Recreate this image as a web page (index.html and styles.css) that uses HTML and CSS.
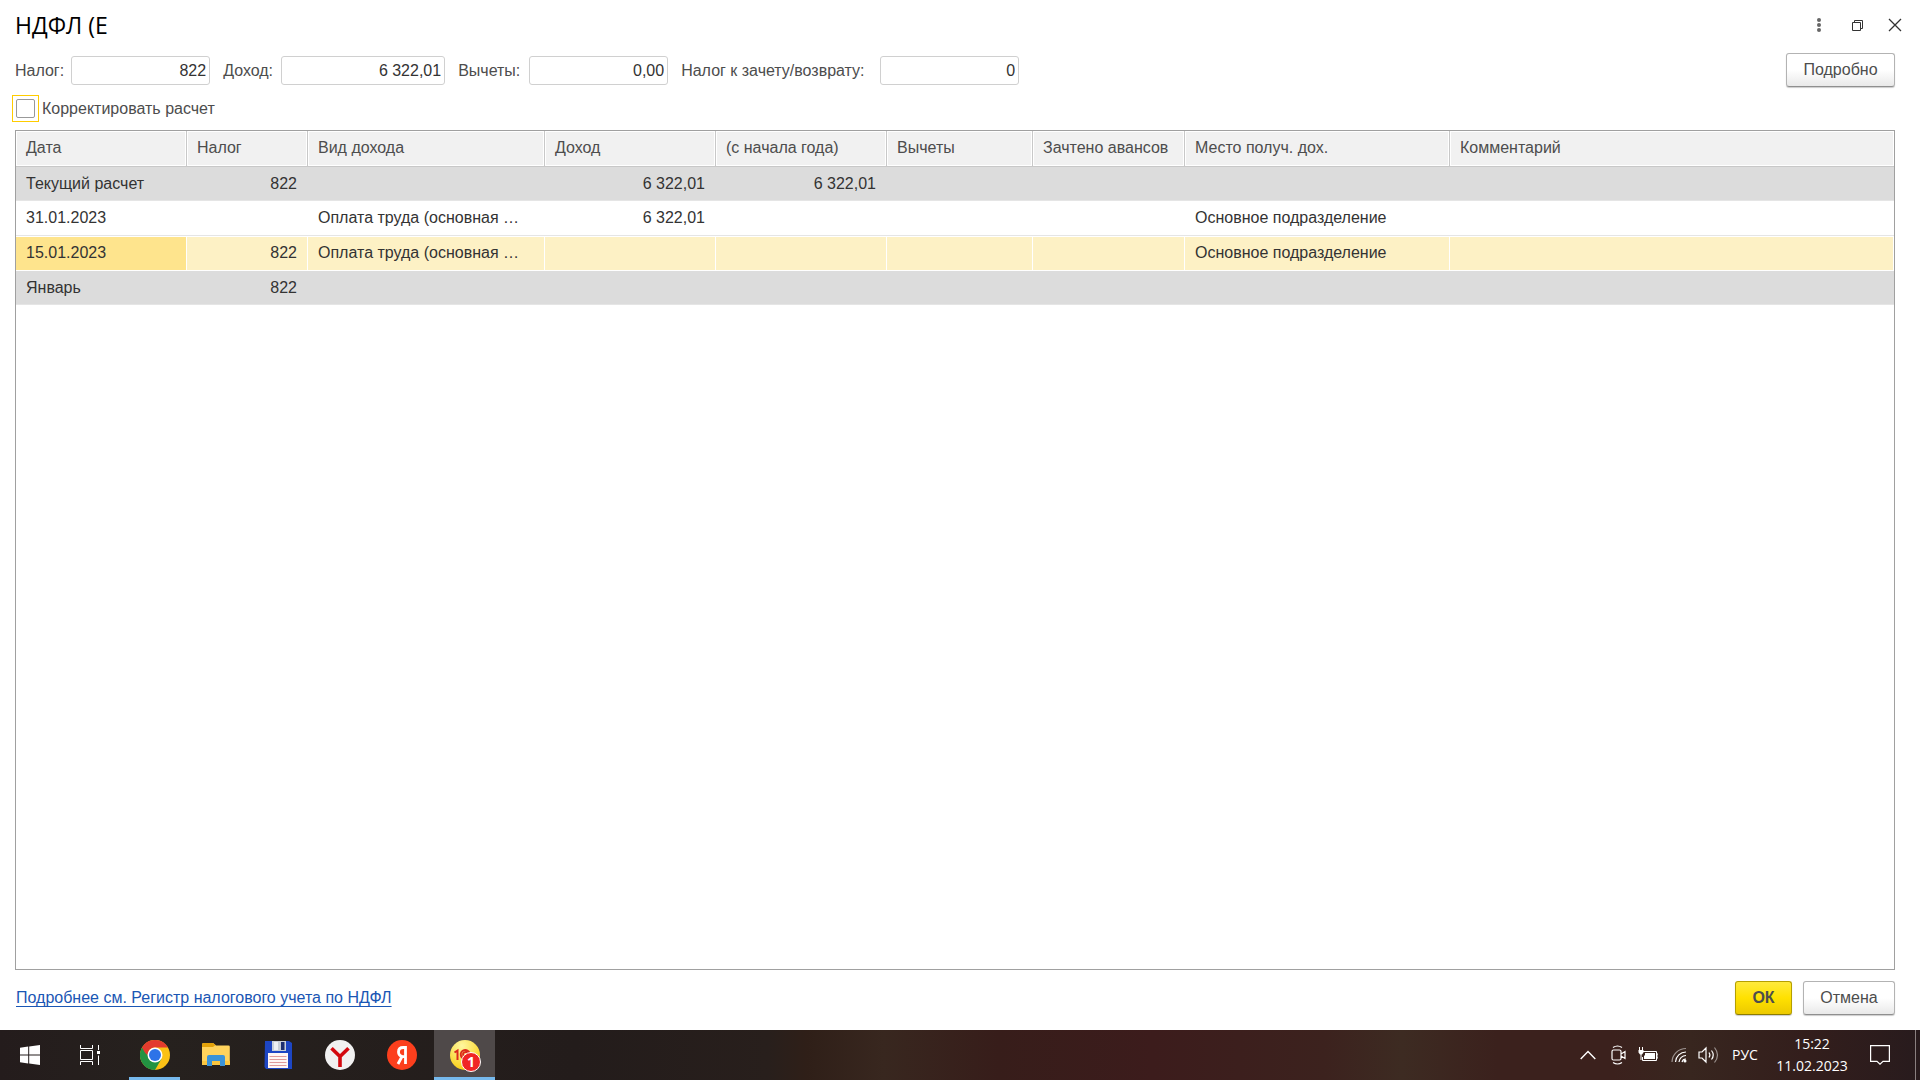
FILE: index.html
```html
<!DOCTYPE html>
<html lang="ru">
<head>
<meta charset="utf-8">
<title>НДФЛ</title>
<link rel="stylesheet" href="styles.css">
</head>
<body>
<main class="window">
  <header class="titlebar">
    <h1 class="title">НДФЛ (Е</h1>
    <div class="window-controls">
      <button class="icon-btn" type="button" aria-label="Меню"><svg width="20" height="20" viewBox="0 0 20 20" fill="#666"><circle cx="10" cy="5" r="2"/><circle cx="10" cy="10" r="2"/><circle cx="10" cy="15" r="2"/></svg></button>
      <button class="icon-btn" type="button" aria-label="Восстановить"><svg width="20" height="20" viewBox="0 0 20 20" fill="none" stroke="#333"><path d="M5.500 7.500h8v8h-8zM7.500 7V5.500h8v8H14"/></svg></button>
      <button class="icon-btn" type="button" aria-label="Закрыть"><svg width="20" height="20" viewBox="0 0 20 20" fill="none" stroke="#333" stroke-width="1.300"><path d="M4 4l12 12M16 4L4 16"/></svg></button>
    </div>
  </header>

  <form class="fields">
    <div class="field"><label for="tax">Налог:</label><input class="num" id="tax" type="text" value="822"></div>
    <div class="field"><label class="l-income" for="income">Доход:</label><input class="num num-wide" id="income" type="text" value="6 322,01"></div>
    <div class="field"><label class="l-deduct" for="deduct">Вычеты:</label><input class="num" id="deduct" type="text" value="0,00"></div>
    <div class="field"><label class="l-refund" for="refund">Налог к зачету/возврату:</label><input class="num" id="refund" type="text" value="0"></div>
    <button class="btn btn-details" type="button">Подробно</button>
  </form>

  <div class="adjust">
    <span class="check-focus"><input class="check" id="adjust" type="checkbox"></span>
    <label for="adjust">Корректировать расчет</label>
  </div>

  <div class="grid-box">
    <table class="grid">
      <colgroup><col class="c-date"><col class="c-tax"><col class="c-kind"><col class="c-sum"><col class="c-sum"><col class="c-deduct"><col class="c-advance"><col class="c-place"><col></colgroup>
      <thead>
        <tr><th>Дата</th><th>Налог</th><th>Вид дохода</th><th>Доход</th><th>(с начала года)</th><th>Вычеты</th><th>Зачтено авансов</th><th>Место получ. дох.</th><th>Комментарий</th></tr>
      </thead>
      <tbody>
        <tr class="group"><td>Текущий расчет</td><td class="r">822</td><td></td><td class="r">6 322,01</td><td class="r">6 322,01</td><td></td><td></td><td></td><td></td></tr>
        <tr><td>31.01.2023</td><td></td><td>Оплата труда (основная …</td><td class="r">6 322,01</td><td></td><td></td><td></td><td>Основное подразделение</td><td></td></tr>
        <tr class="selected"><td class="current">15.01.2023</td><td class="r">822</td><td>Оплата труда (основная …</td><td></td><td></td><td></td><td></td><td>Основное подразделение</td><td></td></tr>
        <tr class="group"><td>Январь</td><td class="r">822</td><td></td><td></td><td></td><td></td><td></td><td></td><td></td></tr>
      </tbody>
    </table>
  </div>

  <footer class="actions">
    <a class="link" href="#register">Подробнее см. Регистр налогового учета по НДФЛ</a>
    <button class="btn btn-ok" type="button">ОК</button>
    <button class="btn btn-cancel" type="button">Отмена</button>
  </footer>
</main>

<nav class="taskbar">
  <button class="sys" type="button" aria-label="Пуск"><svg width="20" height="20" viewBox="0 0 20 20" fill="#fff"><path d="M0 2.800L8.200 1.600V9.500H0zM9.200 1.400L20 0v9.500H9.200zM0 10.500h8.200v8L0 17.300zM9.200 10.500H20V20L9.200 18.600z"/></svg></button>
  <button class="sys" type="button" aria-label="Представление задач"><svg width="20" height="20" viewBox="0 0 20 20" fill="none" stroke="#fff"><path d="M.5 0v3.500h12V0M.5 20v-3.500h12V20M.5 5.500h12v9H.5zM18.500 0v5M18.500 10.500V20"/><path d="M17 6h3v3h-3z" fill="#fff" stroke="none"/></svg></button>
  <div class="apps">
    <button class="app running" type="button" aria-label="Chrome"><svg width="30" height="30" viewBox="0 0 30 30"><circle cx="15" cy="15" r="15" fill="#fbc116"/><path d="M15 30l6.500-11.200L15 15 2 7.500A15 15 0 0 0 15 30z" fill="#229342"/><path d="M2 7.500A15 15 0 0 1 28 7.500H15c-5 0-7.500 4-7.300 8L5 12.700z" fill="#e33b2e"/><circle cx="15" cy="15" r="7.500" fill="#fff"/><circle cx="15" cy="15" r="6" fill="#2d73e8"/></svg></button>
    <button class="app" type="button" aria-label="Проводник"><svg width="28" height="24" viewBox="0 0 28 24"><path d="M0 1.500Q0 0 1.500 0H11l3 2.500h12.500q1.300 0 1.300 1.300V22H0z" fill="#ffd35c"/><path d="M0 4V1.500Q0 0 1.500 0H11l2.500 2-2.500 2z" fill="#e3a20a"/><path d="M0 18h28v3.500Q28 22 27 22H1q-1 0-1-1z" fill="#fbc63f"/><path d="M5 23V14q0-2 2-2h14q2 0 2 2v9h-5v-5h-8v5z" fill="#3a93d8"/></svg></button>
    <button class="app" type="button" aria-label="Total Commander"><svg width="28" height="30" viewBox="0 0 28 30"><path d="M1 1h24l3 2v26H2l-1.500-2z" fill="#1d46c4"/><path d="M8 1h14v10H8z" fill="#c9d0d8"/><path d="M17 2h3.500v8H17z" fill="#1d2f70"/><path d="M10 2h4v8h-4z" fill="#eef1f4"/><path d="M4 13h20v15H4z" fill="#fff6f4"/><path d="M5.500 16.500h17m-17 3h17m-17 3h17m-17 3h17" stroke="#e09a9a"/></svg></button>
    <button class="app" type="button" aria-label="Яндекс Браузер"><svg width="30" height="30" viewBox="0 0 30 30"><circle cx="15" cy="15" r="15" fill="#f1f1f1"/><path d="M6.500 8.200L15 16.500l8.500-8.300M15 16v11" fill="none" stroke="#d3090f" stroke-width="3.600"/></svg></button>
    <button class="app" type="button" aria-label="Яндекс"><svg width="30" height="30" viewBox="0 0 30 30"><circle cx="15" cy="15" r="15" fill="#fc3f1d"/><path d="M18.500 24V7.500h-2.300c-3.300 0-4.700 2-4.700 4.400 0 2.600 1.400 4 4 4.700h3M15.300 16L11 24" fill="none" stroke="#fff" stroke-width="2.800"/></svg></button>
    <button class="app running active" type="button" aria-label="1С:Предприятие"><svg width="34" height="32" viewBox="0 0 34 32"><defs><radialGradient id="gold" cx=".4" cy=".2" r=".8"><stop offset="0" stop-color="#fff7a0"/><stop offset="1" stop-color="#f8cf16"/></radialGradient></defs><circle cx="17" cy="16" r="15" fill="url(#gold)"/><path d="M6.500 13.500l3-2V21M21.500 14a4.500 4.500 0 1 0-4 6H22M19.500 15a2.200 2.200 0 1 0-2 2.500H22" fill="none" stroke="#dc2a1c" stroke-width="2"/></svg><span class="badge">1</span></button>
  </div>
  <div class="tray">
    <svg class="t-chevron" width="16" height="10" viewBox="0 0 16 10" fill="none" stroke="#fff" stroke-width="1.400"><path d="M.7 9L8 1.500 15.300 9"/></svg>
    <svg class="t-camera" width="16" height="20" viewBox="0 0 16 20" fill="none" stroke="#fff" stroke-width="1.200"><path d="M2.500 5h6q1.500 0 1.500 1.500v7q0 1.500-1.500 1.500h-6Q1 15 1 13.500v-7Q1 5 2.500 5zM10 9l4-2.500v7L10 11M2 2.500Q6.500-.5 11 2.500M2 17.500q4.500 3 9 0"/></svg>
    <svg class="t-battery" width="20" height="16" viewBox="0 0 20 16" fill="none" stroke="#fff"><path d="M5 4.500h13.500v9h-14V10M18.500 7h1.500v4h-1.500M1.500 0v3M4.500 0v3M3 7v6"/><path d="M.5 3h5v2.500L4 7.500H2L.5 5.500zM7 6h10v6H6V9l1-1z" fill="#fff" stroke="none"/></svg>
    <svg class="t-wifi" width="17" height="16" viewBox="0 0 17 16" fill="none" stroke="#fff" stroke-width="1.200"><g opacity=".5"><path d="M1 15A14 14 0 0 1 15 1.500"/></g><path d="M4.500 15A10.500 10.500 0 0 1 15 5M8 15a7 7 0 0 1 7-6.500M11 15a4 4 0 0 1 4-3"/><circle cx="14" cy="14" r="1.500" fill="#fff" stroke="none"/></svg>
    <svg class="t-volume" width="21" height="18" viewBox="0 0 21 18" fill="none" stroke="#fff" stroke-width="1.200"><path d="M1 6h3l4-4v14l-4-4H1zM11 6.500q1.800 2.500 0 5M13.500 4.500q3.500 4.500 0 9"/><path d="M16.500 1.500q6 7.500 0 15" opacity=".5"/></svg>
    <span class="lang">РУС</span>
    <div class="clock"><time>15:22</time><time>11.02.2023</time></div>
    <svg class="t-notify" width="20" height="20" viewBox="0 0 20 20" fill="none" stroke="#fff" stroke-width="1.200"><path d="M.6.600h18.800v15.800h-6.400L10 19.200 7 16.400H.6z"/></svg>
    <span class="peek"></span>
  </div>
</nav>
</body>
</html>
```

FILE: styles.css
```css
* { box-sizing: border-box; }

body {
  margin: 0;
  min-height: 100vh;
  display: flex;
  flex-direction: column;
  background: #fff;
  color: #333;
  font: 16px/20px "Liberation Sans", Arial, sans-serif;
}

button, input { font: inherit; color: inherit; margin: 0; }
svg { display: block; flex: none; }

.window {
  flex: 1;
  display: flex;
  flex-direction: column;
  padding: 0 25px 0 15px;
}

/* Title bar */
.titlebar {
  display: flex;
  justify-content: space-between;
  align-items: center;
  height: 50px;
  margin-right: -10px;
}
.title {
  margin: 0;
  font: 400 23px/32px "Open Sans", "Noto Sans", sans-serif;
  color: #000;
}
.window-controls { display: flex; gap: 18px; }
.icon-btn { width: 20px; height: 20px; padding: 0; border: 0; background: none; }

/* Field row */
.fields { display: flex; align-items: flex-start; gap: 13px; height: 40px; padding-top: 3px; color: #4d4d4d; }
.field { display: flex; align-items: center; gap: 7px; padding-top: 3px; }
.l-income { min-width: 51px; }
.l-deduct { min-width: 64px; }
.l-refund { min-width: 192px; }
.num {
  width: 139px;
  height: 29px;
  padding: 0 3px;
  border: 1px solid #d0d0d0;
  border-radius: 3px;
  text-align: right;
  color: #333;
  background: #fff;
}
.num-wide { width: 164px; }

.btn {
  height: 34px;
  padding: 0;
  border: 1px solid #b3b3b3;
  border-bottom-color: #8f8f8f;
  border-radius: 3px;
  background: linear-gradient(#fff 50%, #e9e9e9);
  box-shadow: 0 1px 1px #ccc;
  color: #4d4d4d;
}
.btn-details { width: 109px; margin-left: auto; }
.btn-ok {
  width: 57px;
  border-color: #b59f00;
  border-bottom-color: #8d7c00;
  background: linear-gradient(#ffea3c, #ffe100 50%, #ecc900);
  font-weight: 700;
}
.btn-cancel { width: 92px; }

/* Adjustment tick box */
.adjust { display: flex; align-items: center; gap: 3px; height: 40px; padding-bottom: 3px; margin-left: -3px; color: #4d4d4d; }
.check-focus { padding: 3px; border: 1px solid #fc0; }
.check {
  display: block;
  appearance: none;
  width: 19px;
  height: 19px;
  border: 1px solid #999;
  border-radius: 2px;
  background: #fff;
}

/* Data grid */
.grid-box { flex: 1; border: 1px solid #a0a0a0; }
.grid { width: 100%; table-layout: fixed; border-collapse: separate; border-spacing: 0; }
.c-date, .c-sum { width: 171px; }
.c-tax { width: 121px; }
.c-kind { width: 237px; }
.c-deduct { width: 146px; }
.c-advance { width: 152px; }
.c-place { width: 265px; }
.grid th, .grid td {
  height: 35px;
  padding: 0 11px 0 10px;
  text-align: left;
  white-space: nowrap;
  overflow: hidden;
  text-overflow: ellipsis;
  border-bottom: 1px solid #e5e5e5;
}
.grid th {
  height: 36px;
  padding-right: 0;
  padding-bottom: 2px;
  font-weight: 400;
  color: #4d4d4d;
  background: #f1f1f1;
  border-right: 1px solid #c8c8c8;
  border-bottom-color: #c8c8c8;
  box-shadow: inset 0 0 0 1px #fff;
}
.grid th:last-child { border-right: 0; }
.grid .r { text-align: right; }
.grid .group td { height: 34px; background: #dcdcdc; }
.grid .selected td {
  background: #fdf1c5;
  border-bottom-color: #fff;
  border-right: 1px solid #fff;
  box-shadow: inset 0 1px #fff;
  padding-right: 10px;
}
.grid .selected .current { background: #fee48d; }

/* Bottom actions */
.actions { display: flex; align-items: center; gap: 11px; height: 60px; padding-bottom: 4px; }
.link { margin: 0 auto 0 1px; color: #1a56b4; text-underline-offset: 3px; text-decoration-thickness: 1px; }

/* Taskbar */
.taskbar {
  display: flex;
  height: 50px;
  color: #fff;
  background: linear-gradient(90deg, #241c1c, #26211e 8%, #231c1b 30%, #281f1c 40%, #2f1f18 42%, #38271f 46%, #371d1a 52%, #3c1c1c 60%, #3c221e 69%, #3d2b22 73%, #3b211d 78%, #3b211d 84%, #38261f 88%, #331e1c 94%, #281b1d);
}
.taskbar button { padding: 0; border: 0; background: none; color: #fff; display: flex; align-items: center; justify-content: center; }
.taskbar .sys { width: 60px; }
.apps { display: flex; margin-left: 3px; }
.taskbar .app { position: relative; width: 62px; border: solid transparent; border-width: 3px 0; }
.taskbar .running { border-bottom-color: #76b9ed; }
.taskbar .running:not(.active) { margin: 0 5px 0 6px; width: 51px; }
.taskbar .active { background-color: #4f4949; width: 61px; margin-left: 1px; }
.badge {
  position: absolute;
  left: 27px;
  top: 19px;
  width: 20px;
  height: 20px;
  border: 1px solid #fff;
  border-radius: 50%;
  background: #f02525;
  font: 700 14px/18px "Open Sans", sans-serif;
  text-align: center;
}
.tray {
  display: flex;
  align-items: center;
  margin-left: auto;
  font: 14px/22px "Open Sans", "Noto Sans", sans-serif;
}
.t-chevron { margin-right: 15px; }
.t-camera { margin-right: 11px; }
.t-battery { margin-right: 13px; }
.t-wifi { margin-right: 10px; }
.t-volume { margin-right: 13px; }
.lang { width: 42px; }
.clock { display: flex; flex-direction: column; align-items: center; width: 76px; margin-right: 20px; }
.peek { width: 5px; height: 50px; margin-left: 25px; border-left: 1px solid #8a8080; }
```
